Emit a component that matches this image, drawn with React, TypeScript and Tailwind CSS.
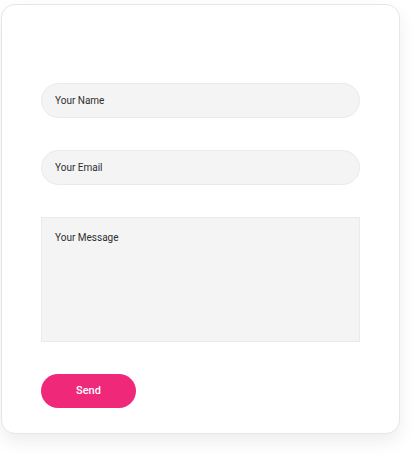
const fieldBase =
  "w-full bg-[#f4f4f4] border border-[#eaeaea] text-[10px] text-[#2e2e2e] placeholder:text-[#2e2e2e] outline-none";

export default function App() {
  return (
    <div className="min-h-[456px] bg-white pt-[4px] pl-[1px] font-['Roboto',sans-serif]">
      <form className="w-[399px] h-[430px] rounded-[14px] border border-[#e6e6e6] bg-white shadow-[0_8px_18px_rgba(0,0,0,0.07)] px-[39px] pt-[78px] flex flex-col gap-[32px]">
        <input className={`${fieldBase} h-[35px] rounded-full px-[13px]`} placeholder="Your Name" />
        <input className={`${fieldBase} h-[35px] rounded-full px-[13px]`} placeholder="Your Email" />
        <textarea
          className={`${fieldBase} h-[125px] resize-none px-[13px] pt-[14px] leading-[12px]`}
          placeholder="Your Message"
        />
        <button
          type="button"
          className="w-[95px] h-[34px] rounded-full bg-[#f0287a] text-white text-[11px] font-medium"
        >
          Send
        </button>
      </form>
    </div>
  );
}
